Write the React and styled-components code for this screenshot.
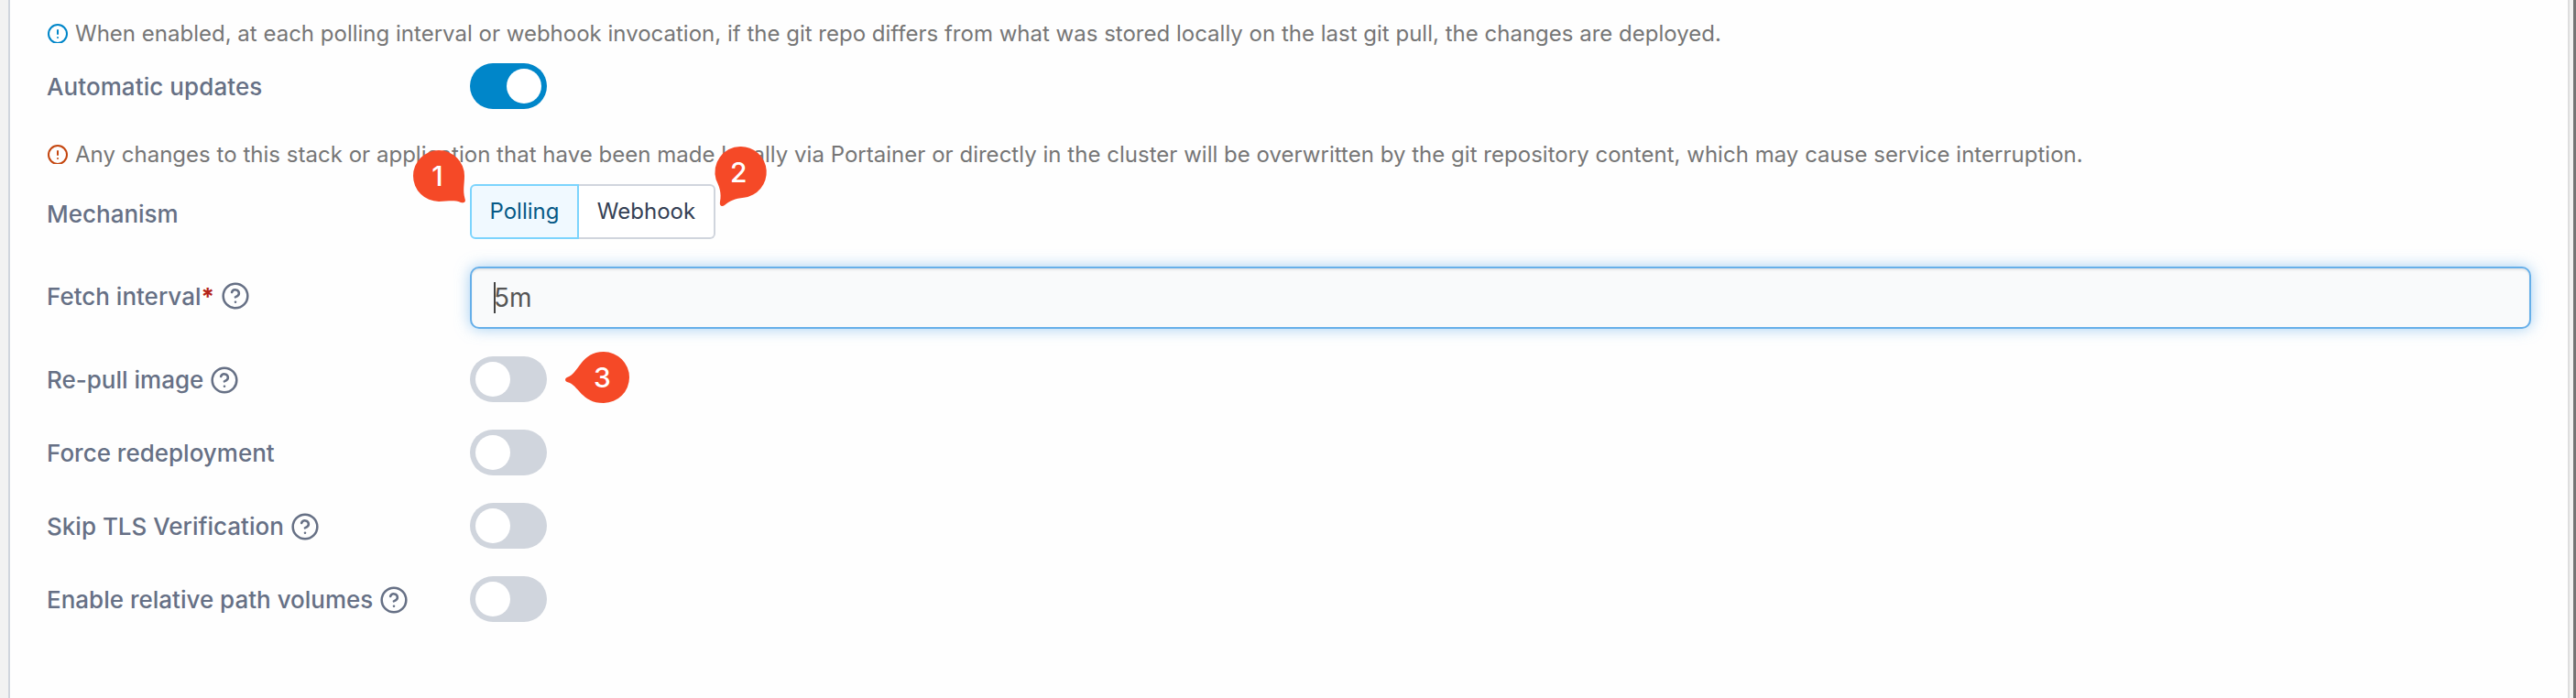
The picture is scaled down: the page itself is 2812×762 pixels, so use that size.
import React from "react";
import styled, { createGlobalStyle, css } from "styled-components";
import { CircleAlert } from "lucide-react";

const GlobalStyle = createGlobalStyle`
  *, *::before, *::after { box-sizing: border-box; }
  body { margin: 0; background: #f2f2f2; font-family: Inter, "Liberation Sans", sans-serif; }
`;

const Page = styled.div`
  display: flex;
  width: 2812px;
  height: 762px;
  overflow: hidden;
  background: #f2f2f2;
  border-right: 3px solid #757575;
`;

const Panel = styled.main`
  position: relative;
  width: 2796px;
  margin-left: 9px;
  padding: 25px 40px 0;
  background: #fefefe;
  border-left: 2px solid #d0d5dd;
  border-right: 2px solid #dedede;
`;

const Note = styled.p`
  display: flex;
  align-items: flex-start;
  gap: 7px;
  height: 22px;
  margin: ${(p) => p.$margin || 0};
  font-size: 24px;
  line-height: 23px;
  letter-spacing: ${(p) => p.$tracking || 0}px;
  color: #767676;
  white-space: nowrap;
`;

const NoteIcon = styled.span`
  flex: none;
  width: 24px;
  height: 22px;
  overflow: hidden;
  color: ${(p) => (p.$tone === "warning" ? "#c4460f" : "#0086c9")};
  svg { display: block; }
`;

const Row = styled.div`
  display: grid;
  grid-template-columns: 462px 1fr;
  align-items: center;
  height: ${(p) => p.$height || 80}px;
`;

const Rows = styled.div`
  padding-top: 7px;
`;

const Label = styled.label`
  display: flex;
  align-items: center;
  padding: ${(p) => p.$pad || "1px 0 0"};
  font-size: 26px;
  font-weight: 500;
  line-height: 35px;
  letter-spacing: ${(p) => p.$tracking || 0}px;
  color: #667085;
  white-space: nowrap;
  svg { margin: ${(p) => (p.$pad ? "0 0 1px 7px" : "1px 0 0 7px")}; }
`;

const Required = styled.span`
  min-width: 14.5px;
  color: #b42318;
  font-weight: 700;
`;

const Switch = styled.span`
  display: flex;
  justify-content: ${(p) => (p.$on ? "flex-end" : "flex-start")};
  width: 84px;
  height: 50px;
  padding: 6px;
  border-radius: 25px;
  background: ${(p) => (p.$on ? "#0086c9" : "#d0d5dd")};
`;

const Knob = styled.span`
  width: 38px;
  height: 38px;
  border-radius: 50%;
  background: #fff;
`;

const ButtonGroup = styled.div`
  display: flex;
  height: 60px;
`;

const Option = styled.button`
  width: ${(p) => p.$width}px;
  height: 60px;
  padding: 0 0 2px;
  font: 400 24px/33px Inter, sans-serif;
  border: 2px solid #d0d5dd;
  border-left: 0;
  border-radius: 0 6px 6px 0;
  background: #fff;
  color: #344054;
  ${(p) =>
    p.$active &&
    css`
      border: 2px solid #7cd4fd;
      border-radius: 6px 0 0 6px;
      background: #f0f9ff;
      color: #065986;
    `}
`;

const Field = styled.div`
  display: flex;
  align-items: center;
  width: 2250px;
  height: 68px;
  padding-left: 24px;
  border: 2px solid #66afe9;
  border-radius: 10px;
  background: #f9fafb;
  color: #555;
  font-size: 28px;
  line-height: 34px;
  box-shadow: inset 0 2px 2px rgba(0, 0, 0, 0.075), 0 0 16px rgba(102, 175, 233, 0.6);
`;

const Caret = styled.span`
  width: 2px;
  height: 34px;
  margin-right: -2px;
  background: #444;
`;

const Marker = styled.div`
  position: absolute;
  left: ${(p) => p.$x}px;
  top: ${(p) => p.$y}px;
  width: 56px;
  height: 56px;
  padding-right: 3px;
  color: #fff;
  font-size: 30px;
  font-weight: 500;
  line-height: 56px;
  text-align: center;
  svg { position: absolute; inset: 0; overflow: visible; }
  span { position: relative; }
`;

const tails = {
  1: "M28 0A28 28 0 0 1 56 28C56 38 54 43 56.5 53C58 57 55 58 52 57C44 54 38 56 28 56A28 28 0 0 1 28 0Z",
  2: "M28 0A28 28 0 0 1 32 55.8C22 57 17 59 11 64C8 66 5 65 6 60C8 51 5 43 1.6 36A28 28 0 0 1 28 0Z",
  3: "M28 0A28 28 0 0 1 28 56C3 56 1 36 -12 33C-14.5 32.2 -14.5 28.8 -12 28C1 24 3 0 28 0Z",
};

function Callout({ n, x, y }) {
  return (
    <Marker $x={x} $y={y}>
      <svg width="56" height="56" viewBox="0 0 56 56"><path d={tails[n]} fill="#f54927" /></svg>
      <span>{n}</span>
    </Marker>
  );
}

function Toggle({ on }) {
  return <Switch $on={on}><Knob /></Switch>;
}

function Help() {
  return (
    <svg width="32" height="32" viewBox="0 0 24 24" fill="none" stroke="currentColor" strokeWidth="1.9" strokeLinecap="round" strokeLinejoin="round">
      <circle cx="12" cy="12" r="10" />
      <path d="M9.09 9a3 3 0 0 1 5.83 1c0 2-3 3-3 3" />
      <path d="M12 17h.01" />
    </svg>
  );
}

export default function App() {
  return (
    <>
      <GlobalStyle />
      <Page>
        <Panel>
          <Note $tracking={0.005}>
            <NoteIcon><CircleAlert size={24} /></NoteIcon>
            When enabled, at each polling interval or webhook invocation, if the git repo differs from what was stored locally on the last git pull, the changes are deployed.
          </Note>
          <Row $height={94}><Label $tracking={0.08}>Automatic updates</Label><Toggle on /></Row>
          <Note $margin="16px 0 0" $tracking={0.023}>
            <NoteIcon $tone="warning"><CircleAlert size={24} /></NoteIcon>
            Any changes to this stack or application that have been made locally via Portainer or directly in the cluster will be overwritten by the git repository content, which may cause service interruption.
          </Note>
          <Row $height={104}>
            <Label $pad="5px 0 0">Mechanism</Label>
            <ButtonGroup>
              <Option $active $width={119}>Polling</Option>
              <Option $width={149}>Webhook</Option>
            </ButtonGroup>
          </Row>
          <Row $height={84}>
            <Label $pad="0 0 3px">Fetch interval<Required>*</Required><Help /></Label>
            <Field><Caret />5m</Field>
          </Row>
          <Rows>
            <Row><Label>Re-pull image<Help /></Label><Toggle /></Row>
            <Row><Label>Force redeployment</Label><Toggle /></Row>
            <Row><Label>Skip TLS Verification<Help /></Label><Toggle /></Row>
            <Row><Label>Enable relative path volumes<Help /></Label><Toggle /></Row>
          </Rows>
          <Callout n={1} x={440} y={163.5} />
          <Callout n={2} x={768.7} y={160.2} />
          <Callout n={3} x={620} y={384} />
        </Panel>
      </Page>
    </>
  );
}
